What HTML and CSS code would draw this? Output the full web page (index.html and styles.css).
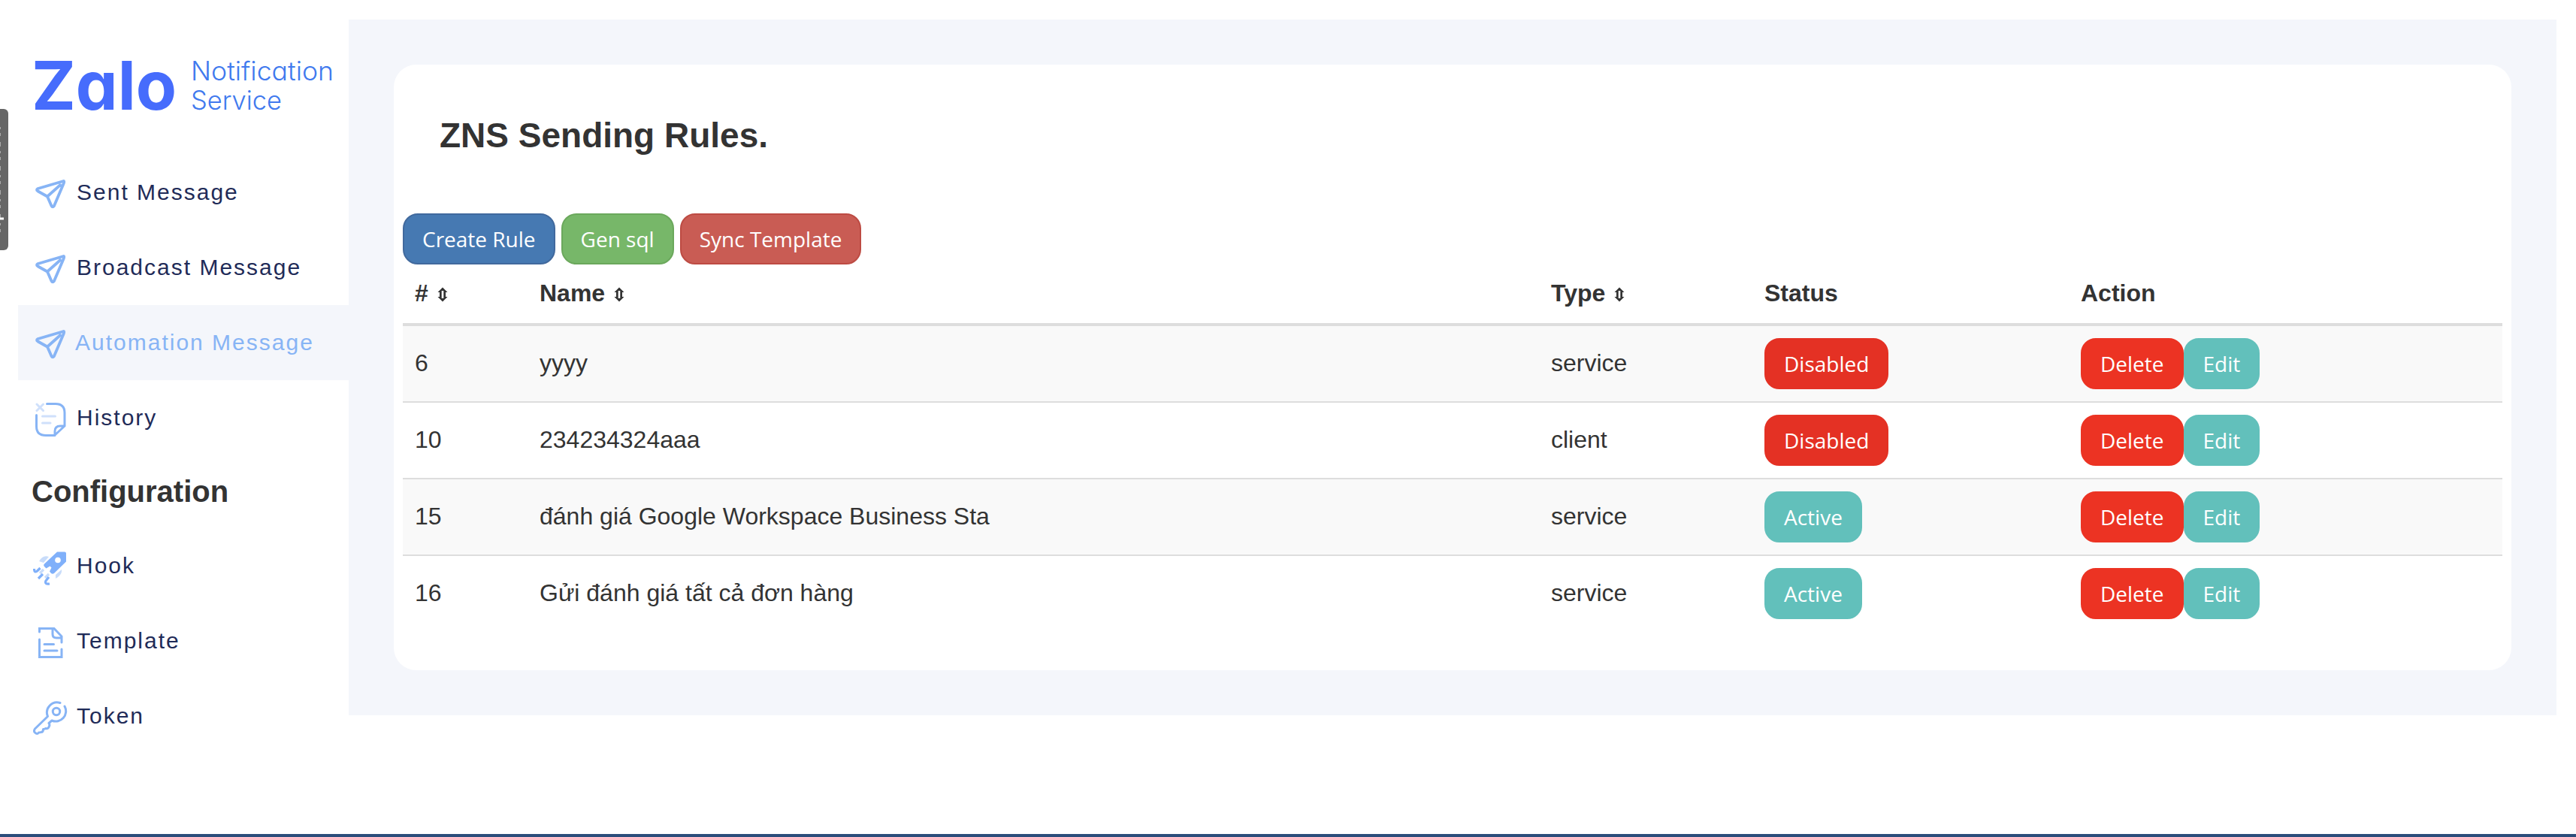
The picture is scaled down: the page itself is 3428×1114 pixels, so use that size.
FILE: index.html
```
<!DOCTYPE html>
<html lang="en">
<head>
<meta charset="utf-8">
<title>ZNS Sending Rules</title>
<link rel="stylesheet" href="styles.css">
</head>
<body>
<svg class="defs" aria-hidden="true">
  <symbol id="plane" viewBox="0 0 48 48">
    <path d="M40.500 5 6.500 15q-3 1.500 0 3.500L19 25.500l5.500 12.500q1.500 2.500 3.500 0L40.800 8q1-3-.3-3zM19 25.500 37.500 9" fill="none" stroke="#87b4f5" stroke-width="3.800" stroke-linejoin="round"/>
  </symbol>
  <symbol id="sort" viewBox="0 0 14 20">
    <path d="M7 .5 13.500 7H11v6h2.500L7 19.500.5 13H3V7H.5z" fill="#333"/>
    <path d="M7 5v10" stroke="#fff" stroke-width="2.600"/>
  </symbol>
</svg>
<div class="page">
  <aside class="sidebar">
    <svg class="logo" viewBox="0 0 412 90">
      <text class="logo-name" x="18" y="72" textLength="193" lengthAdjust="spacingAndGlyphs">Zalo</text>
      <text class="logo-sub" x="230" y="33" textLength="190" lengthAdjust="spacingAndGlyphs">Notification</text>
      <text class="logo-sub" x="230" y="72" textLength="121" lengthAdjust="spacingAndGlyphs">Service</text>
    </svg>
    <nav>
      <a class="item"><svg class="icon"><use href="#plane"/></svg>Sent Message</a>
      <a class="item"><svg class="icon"><use href="#plane"/></svg>Broadcast Message</a>
      <a class="item active"><svg class="icon"><use href="#plane"/></svg>Automation Message</a>
      <a class="item"><svg class="icon" viewBox="0 2 48 48"><g fill="none" stroke="#87b4f5" stroke-width="3" stroke-linecap="round" stroke-linejoin="round"><path d="M18.500 3.500H30q12 0 12 12V33L28.500 45.500H17q-12.500 0-12.500-12V18.500M42 33h-6q-7 0-7 7v5.500"/><path stroke="#cfe0fb" d="m5 4 8.500 8.500M13.500 4 5 12.500M12.500 20h17M12.500 29h10.500"/></g></svg>History</a>
      <h2 class="group">Configuration</h2>
      <a class="item"><svg class="icon" viewBox="0 0 48 48"><path d="M32 1.500h10q2 0 2 2v11L28 30q-2 1.500-4 0l-2-2.500 2.500-5-2-2-5 3-2.500-2.500q-1.500-2 0-3.500z" fill="#80b0fa"/><circle cx="33" cy="12.500" r="3.800" fill="#fff"/><path d="M8 14q5-9 13-6l-7 8zM30 37q9-5 8-12l-8 7z" fill="#c8dcfa"/><path d="m14 25-5 5M21 31l-5 5" stroke="#c8dcfa" stroke-width="3.200"/><path d="M1.500 24q0 6 4 3l4-4M22 44q-7 1-5-4l4-5M13 31l-6 6" fill="none" stroke="#80b0fa" stroke-width="3.200"/></svg>Hook</a>
      <a class="item"><svg class="icon" viewBox="0 0 48 48"><path d="M8.500 8V3.500H28L38 14v8M8.500 18v23.500H38V31M26 4v7q0 5 5 5h7M15 24.500h12.500M15 33h17" fill="none" stroke="#87b4f5" stroke-width="3" stroke-linecap="round"/></svg>Template</a>
      <a class="item"><svg class="icon" viewBox="0 0 48 48"><g fill="none" stroke="#87b4f5" stroke-width="3" stroke-linecap="round" stroke-linejoin="round"><path d="M36 2.500A13.500 13.500 0 0 0 19.500 20.500L2.500 37q-2 3 0 5 3 3 5 0 2 0 3-.5 3 0 3-4 2 0 3-1 4 1 5-3 1-2-.5-4l4-3.500A13.500 13.500 0 0 0 42 7"/><circle cx="31" cy="14" r="4.700"/></g></svg>Token</a>
    </nav>
  </aside>
  <main class="content">
    <section class="card">
      <h1>ZNS Sending Rules.</h1>
      <div class="toolbar"><button class="btn primary">Create Rule</button><button class="btn success">Gen sql</button><button class="btn danger">Sync Template</button></div>
      <table>
        <colgroup><col class="c-id"><col class="c-name"><col class="c-type"><col class="c-status"><col></colgroup>
        <thead><tr><th># <svg class="sort"><use href="#sort"/></svg></th><th>Name <svg class="sort"><use href="#sort"/></svg></th><th>Type <svg class="sort"><use href="#sort"/></svg></th><th>Status</th><th>Action</th></tr></thead>
        <tbody>
          <tr><td>6</td><td>yyyy</td><td>service</td><td class="buttons"><button class="btn off">Disabled</button></td><td class="buttons"><button class="btn delete">Delete</button><button class="btn teal">Edit</button></td></tr>
          <tr><td>10</td><td>234234324aaa</td><td>client</td><td class="buttons"><button class="btn off">Disabled</button></td><td class="buttons"><button class="btn delete">Delete</button><button class="btn teal">Edit</button></td></tr>
          <tr><td>15</td><td>đánh giá Google Workspace Business Sta</td><td>service</td><td class="buttons"><button class="btn teal">Active</button></td><td class="buttons"><button class="btn delete">Delete</button><button class="btn teal">Edit</button></td></tr>
          <tr><td>16</td><td>Gửi đánh giá tất cả đơn hàng</td><td>service</td><td class="buttons"><button class="btn teal">Active</button></td><td class="buttons"><button class="btn delete">Delete</button><button class="btn teal">Edit</button></td></tr>
        </tbody>
      </table>
    </section>
  </main>
</div>
<footer class="footer"></footer>
<div class="side-tab"><svg width="11" height="188" viewBox="0 0 11 188"><path d="M.5 24v140" stroke="#aaa" stroke-dasharray="3 5 4 8 6 6"/><path d="M0 146h5" stroke="#fff" stroke-width="3"/></svg></div>
</body>
</html>
```
FILE: styles.css
```
* { box-sizing: border-box; }
body {
  margin: 0;
  height: 1114px;
  overflow: hidden;
  display: flex;
  flex-direction: column;
  background: #fff;
  color: #333;
  font: 32px/46px "Liberation Sans", Arial, sans-serif;
}
.defs { position: absolute; width: 0; height: 0; }
.page { flex: 1; display: flex; align-items: flex-start; padding: 26px 26px 0 24px; }
.sidebar { width: 440px; flex: none; padding-top: 48px; }
.logo { display: block; width: 412px; height: 90px; margin-bottom: 42px; overflow: visible; }
.logo text { font-family: Inter, sans-serif; font-feature-settings: "cv11"; }
.logo-name { font-size: 90px; font-weight: 650; fill: #466cfc; }
.logo-sub { font-size: 35px; font-weight: 300; fill: #4079ee; }
.item {
  display: flex;
  align-items: center;
  height: 100px;
  padding: 0 0 1px 20px;
  color: #1f2b58;
  font-size: 30px;
  letter-spacing: 2px;
}
.icon { width: 48px; height: 48px; margin: 8px 10px 0 0; flex: none; }
.active { background: #f4f6fb; color: #87b4f5; }
.active .icon { margin-right: 8px; }
.group { margin: 0; padding: 23px 0 0 18px; height: 97px; font-size: 40px; line-height: 50px; }
.content { flex: 1; padding: 60px; height: 926px; background: #f4f6fb; }
.card { height: 806px; padding: 0 12px; background: #fff; border-radius: 30px; }
h1 { margin: 0; padding: 68px 0 0 49px; height: 198px; font-size: 46px; line-height: 52px; }
.toolbar { display: flex; gap: 8px; }
.btn {
  height: 68px;
  padding: 0 24px;
  border: 2px solid transparent;
  border-radius: 20px;
  color: #fff;
  font: 28px/64px "Open Sans", "Noto Sans", sans-serif;
  vertical-align: top;
}
.primary { background: #4679b2; border-color: #41699d; }
.success { background: #77b769; border-color: #6ba85c; }
.danger { background: #c95c54; border-color: #bd4b43; }
.off { background: #e43124; border-color: #e43124; }
.delete { background: #ec3323; border-color: #ec3323; }
.teal { background: #62c0bb; border-color: #62c0bb; }
table { width: 100%; border-collapse: separate; border-spacing: 0; table-layout: fixed; }
.c-id { width: 166px; }
.c-name { width: 1346px; }
.c-type { width: 284px; }
.c-status { width: 421px; }
th, td { padding: 0 16px; text-align: left; vertical-align: top; }
th { height: 82px; padding-top: 15px; border-bottom: 4px solid #ddd; }
td { height: 102px; padding-top: 26px; border-bottom: 2px solid #ddd; }
td.buttons { padding-top: 16px; }
tbody tr:nth-child(odd) { background: #f9f9f9; }
tbody tr:last-child td { border-bottom: 0; }
.sort { width: 14px; height: 20px; margin-left: 3px; vertical-align: -1px; }
.footer { height: 4px; flex: none; background: #2b4d7b; }
.side-tab { position: absolute; left: 0; top: 145px; width: 11px; height: 188px; background: #666; border-radius: 0 6px 6px 0; }
.side-tab svg { display: block; }
```
